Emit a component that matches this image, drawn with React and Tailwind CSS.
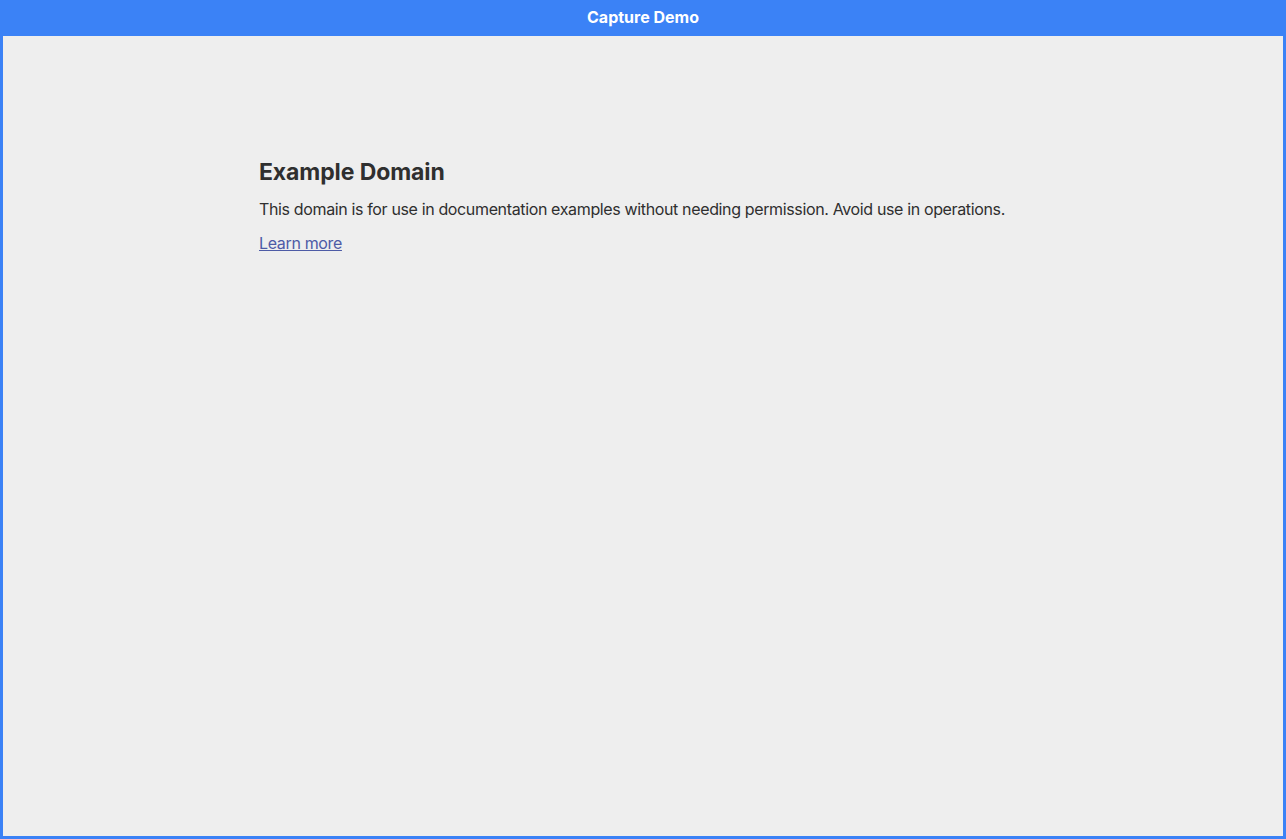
export default function App() {
  return (
    <div className="h-[839px] w-full bg-[#3b82f6] flex flex-col px-[3px] pb-[3px]" style={{ fontFamily: "Inter, 'Liberation Sans', sans-serif" }}>
      <div className="h-[36px] flex items-center justify-center text-white text-[16px] font-bold leading-none pb-[2px]">
        Capture Demo
      </div>
      <div className="flex-1 bg-[#eeeeee]">
        <div className="mx-auto w-[768px] pt-[121px] text-[#2f2f2f]">
          <h1 className="text-[23px] font-bold leading-[30px] tracking-[-0.1px]">Example Domain</h1>
          <p className="text-[16px] leading-[24px] mt-[10px] tracking-[-0.36px] whitespace-nowrap">
            This domain is for use in documentation examples without needing permission. Avoid use in operations.
          </p>
          <p className="text-[16px] leading-[24px] mt-[10px] tracking-[-0.35px]">
            <a href="#" className="text-[#4d5ba6] underline">Learn more</a>
          </p>
        </div>
      </div>
    </div>
  );
}
